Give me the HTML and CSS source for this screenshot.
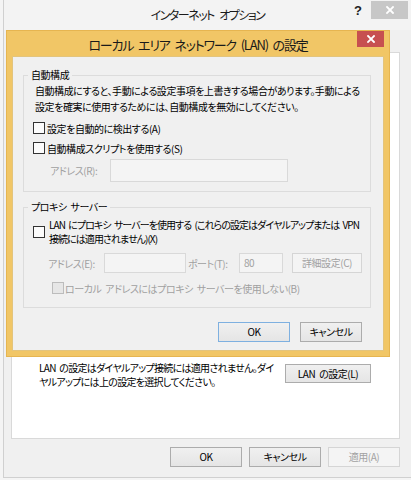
FILE: index.html
```html
<!DOCTYPE html>
<html lang="ja">
<head>
<meta charset="utf-8">
<title>ローカル エリア ネットワーク (LAN) の設定</title>
<link rel="stylesheet" href="styles.css">
</head>
<body>
<div class="screen">
  <div class="window">
    <div class="titlebar">
      <span class="title">インターネット オプション</span>
      <div class="controls">
        <span class="help">?</span>
        <span class="wclose"><svg width="8" height="8" viewBox="0 0 8 8"><path d="M1 1L7 7M7 1L1 7" stroke="#fff" stroke-width="1.8" stroke-linecap="square"/></svg></span>
      </div>
    </div>
    <div class="body">
      <div class="panel">
        <div class="lan-row">
          <p class="lan-text">LAN の設定はダイヤルアップ接続には適用されません。ダイ<br>ヤルアップには上の設定を選択してください。</p>
          <button class="btn lan-btn">LAN の設定(L)</button>
        </div>
      </div>
      <div class="footer">
        <button class="btn fbtn">OK</button>
        <button class="btn fbtn">キャンセル</button>
        <button class="btn fbtn disabled">適用(A)</button>
      </div>
    </div>
  </div>

  <div class="dialog">
    <div class="dtitlebar">
      <span class="dtitle">ローカル エリア ネットワーク (LAN) の設定</span>
      <div class="dcontrols">
        <span class="dclose"><svg width="8" height="8" viewBox="0 0 8 8"><path d="M1 1L7 7M7 1L1 7" stroke="#fff" stroke-width="1.8" stroke-linecap="square"/></svg></span>
      </div>
    </div>
    <div class="dcontent">
      <fieldset class="group g1">
        <legend>自動構成</legend>
        <p class="desc">自動構成にすると、手動による設定事項を上書きする場合があります。手動による<br>設定を確実に使用するためには、自動構成を無効にしてください。</p>
        <div class="cbrow r1"><span class="cb"></span><span>設定を自動的に検出する(A)</span></div>
        <div class="cbrow r2"><span class="cb"></span><span>自動構成スクリプトを使用する(S)</span></div>
        <div class="addr1">
          <span class="lbl dis l1">アドレス(R):</span>
          <span class="input i1"></span>
        </div>
      </fieldset>
      <fieldset class="group g2">
        <legend>プロキシ サーバー</legend>
        <div class="cbrow proxy"><span class="cb"></span><span class="ptext">LAN にプロキシ サーバーを使用する (これらの設定はダイヤルアップまたは VPN<br>接続には適用されません)(X)</span></div>
        <div class="addr2">
          <span class="lbl dis l2">アドレス(E):</span>
          <span class="input i2"></span>
          <span class="lbl dis l3">ポート(T):</span>
          <span class="input i3 dis">80</span>
          <button class="btn disabled adv">詳細設定(C)</button>
        </div>
        <div class="cbrow local dis"><span class="cb cbdis"></span><span>ローカル アドレスにはプロキシ サーバーを使用しない(B)</span></div>
      </fieldset>
      <div class="dbuttons">
        <button class="btn default okb">OK</button>
        <button class="btn cancelb">キャンセル</button>
      </div>
    </div>
  </div>
</div>
</body>
</html>
```

FILE: styles.css
```css
* { box-sizing: border-box; }

body {
  margin: 0;
  background: #f4f4f4;
  font-family: "Noto Sans CJK JP", "Noto Sans", sans-serif;
  font-size: 10px;
  letter-spacing: -0.45px;
  word-spacing: 2px;
  font-feature-settings: "palt";
  color: #000;
}

.screen {
  position: relative;
  width: 411px;
  height: 480px;
  overflow: hidden;
}

/* Outer window */
.window {
  margin-left: 3px;
  width: 408px;
  height: 478px;
  background: #f0f0f0;
  border-left: 1px solid #d0d0d0;
  border-bottom: 1px solid #d0d0d0;
  display: flex;
  flex-direction: column;
}

.titlebar {
  height: 30px;
  background: #f3f3f3;
  display: grid;
  grid-template-columns: 1fr auto 1fr;
}

.title {
  grid-column: 2;
  font-size: 12px;
  letter-spacing: -1.5px;
  word-spacing: 4px;
  line-height: 30px;
  color: #1a1a1a;
}

.controls {
  grid-column: 3;
  justify-self: end;
  display: flex;
  align-items: flex-start;
}

.help {
  font-family: "Liberation Sans", sans-serif;
  font-weight: bold;
  font-size: 13px;
  letter-spacing: 0;
  line-height: 14px;
  margin-top: 4px;
  margin-right: 9px;
  color: #222;
}

.wclose {
  width: 37px;
  height: 18px;
  margin-top: 1px;
  margin-right: 3px;
  background: #c7c7c7;
  display: flex;
  align-items: center;
  justify-content: center;
}

.body {
  flex: 1;
  padding: 22px 11px 0 7px;
  display: flex;
  flex-direction: column;
}

.panel {
  height: 387px;
  background: #fff;
  border: 1px solid #d9d9d9;
  display: flex;
  flex-direction: column;
  justify-content: flex-end;
  padding: 0 28px 49px 27px;
}

.lan-row {
  display: flex;
  justify-content: space-between;
  align-items: flex-start;
}

.lan-text {
  margin: 0;
  line-height: 14px;
  letter-spacing: -0.7px;
  white-space: nowrap;
}

.btn {
  font: inherit;
  letter-spacing: inherit;
  word-spacing: inherit;
  font-feature-settings: "palt";
  white-space: nowrap;
  height: 20px;
  padding: 0;
  line-height: 18px;
  border: 1px solid #acacac;
  background: linear-gradient(#f0f0f0, #e5e5e5);
  color: #000;
}

.btn.disabled {
  border-color: #d5d5d5;
  background: #f4f4f4;
  color: #a2a2a2;
}

.btn.default {
  border-color: #7eb0e0;
}

.lan-btn {
  width: 86px;
  height: 19px;
  line-height: 17px;
  margin-top: 3px;
}

.footer {
  display: flex;
  justify-content: flex-end;
  gap: 7px;
  margin-top: 8px;
}

.fbtn {
  width: 72px;
}

/* Dialog */
.dialog {
  position: absolute;
  left: 6px;
  top: 30px;
  width: 384px;
  height: 327px;
  background: #f1c666;
  border: 1px solid #e6b550;
  display: flex;
  flex-direction: column;
}

.dtitlebar {
  height: 25px;
  display: grid;
  grid-template-columns: 1fr auto 1fr;
}

.dtitle {
  grid-column: 2;
  font-size: 13px;
  letter-spacing: -1.2px;
  word-spacing: 3px;
  line-height: 27px;
  color: #1a1a1a;
}

.dcontrols {
  grid-column: 3;
  justify-self: end;
  display: flex;
  align-items: flex-start;
  margin-right: 5px;
}

.dclose {
  width: 27px;
  height: 16px;
  background: #c75050;
  display: flex;
  align-items: center;
  justify-content: center;
}

.dcontent {
  margin: 0 5px 5px;
  flex: 1;
  background: #f0f0f0;
  border: 1px solid #e3c47c;
  padding: 11px 12px 0 10px;
}

.group {
  margin: 0;
  padding: 0;
  border: 1px solid #dcdcdc;
  min-width: 0;
}

.group legend {
  padding: 0 3px;
  margin-left: 4px;
  line-height: 14px;
}

.g1 {
  padding: 1px 0 9px 0;
}

.desc {
  margin: 0 0 0 11px;
  line-height: 16px;
  white-space: nowrap;
}

.cbrow {
  display: flex;
  align-items: center;
  height: 16px;
  padding-left: 9px;
  gap: 2px;
  white-space: nowrap;
}

.cb {
  width: 12px;
  height: 12px;
  border: 1px solid #333;
  background: #fcfcfc;
  flex: none;
}

.cb.cbdis {
  border-color: #bcbcbc;
  background: #e6e6e6;
}

.r1 { margin-top: 5px; }
.r2 { margin-top: 4px; }

.dis { color: #a0a0a0; }

.addr1 {
  display: flex;
  align-items: center;
  margin-top: 3px;
  padding-left: 26px;
}

.lbl { white-space: nowrap; }

.l1 { width: 60px; }

.input {
  display: block;
  border: 1px solid #d9d9d9;
  background: #f4f4f4;
}

.i1 { width: 178px; height: 23px; }

.g2 {
  margin-top: 8px;
  padding: 4px 0 11px 0;
}

.proxy {
  height: 28px;
  gap: 4px;
}

.ptext {
  line-height: 14px;
  letter-spacing: -0.95px;
}

.addr2 {
  display: flex;
  align-items: center;
  margin-top: 7px;
  padding-left: 24px;
  height: 20px;
}

.l2 { width: 56px; }
.i2 { width: 82px; height: 20px; }
.l3 { width: 51px; margin-left: 2px; }
.i3 {
  width: 44px;
  height: 20px;
  line-height: 18px;
  padding-left: 4px;
}

.adv {
  width: 70px;
  margin-left: 9px;
}

.local {
  margin-top: 7px;
  padding-left: 28px;
  gap: 1px;
}

.dbuttons {
  display: flex;
  justify-content: flex-end;
  gap: 10px;
  margin-top: 14px;
  padding-right: 9px;
}

.okb { width: 72px; }
.cancelb { width: 62px; }
```
